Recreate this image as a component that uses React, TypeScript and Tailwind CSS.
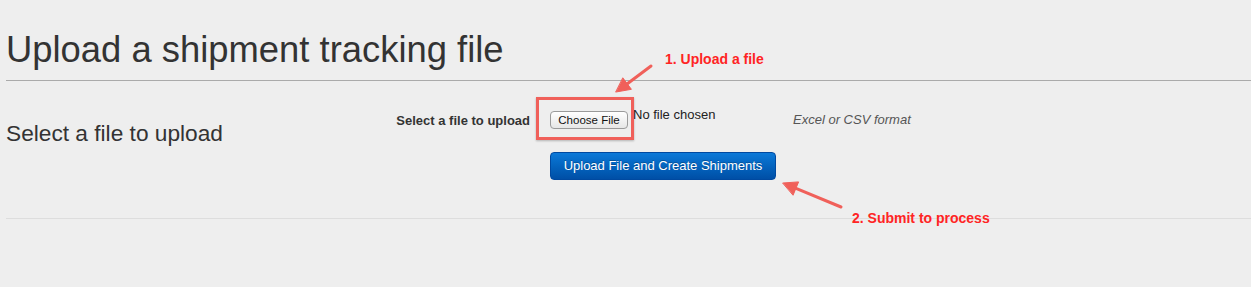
export default function App() {
  return (
    <div
      className="relative w-[1251px] h-[287px] overflow-hidden bg-[#eeeeee] text-[#333333]"
      style={{ fontFamily: '"Liberation Sans", Arial, sans-serif' }}
    >
      {/* Page header */}
      <div className="ml-[6px] pt-[30px] pb-[10px] border-b border-[#aaaaaa]">
        <h1 className="text-[36.4px] leading-[40px] font-normal">Upload a shipment tracking file</h1>
      </div>

      {/* Upload section */}
      <div className="ml-[6px] flex h-[138px] border-b border-[#dddddd]">
        <div className="w-[364px] pt-[37px]">
          <h3 className="text-[22.7px] leading-[30px] font-normal">Select a file to upload</h3>
        </div>

        <div className="flex flex-col pt-[24px]">
          <div className="flex items-start h-[26px]">
            <label className="w-[160px] mt-[6px] text-right text-[13px] leading-[20px] font-bold">
              Select a file to upload
            </label>
            <div className="ml-[20px] w-[238px] flex items-start">
              <button className="mt-[6px] h-[18px] w-[78px] rounded-[4px] border border-[#9a9a9a] bg-gradient-to-b from-white to-[#e6e6e6] text-[11.5px] leading-[16px] text-[#111111]">
                Choose File
              </button>
              <span className="ml-[5px] mt-[2.5px] text-[13px] leading-[14px] text-[#222222]">No file chosen</span>
            </div>
            <span className="ml-[5px] mt-[4.5px] text-[13px] leading-[20px] italic text-[#555555]">
              Excel or CSV format
            </span>
          </div>
          <div className="ml-[180px] mt-[21px]">
            <button className="h-[28px] w-[226px] rounded-[4px] border border-[#0049a0] bg-gradient-to-b from-[#0c79d8] to-[#004fa6] text-[13px] text-white [text-shadow:0_-1px_0_rgba(0,0,0,0.25)]">
              Upload File and Create Shipments
            </button>
          </div>
        </div>
      </div>

      {/* Annotations */}
      <div className="absolute left-[536px] top-[97px] w-[98px] h-[43px] border-[3px] border-[#f0605a] shadow-[0_1px_2px_rgba(0,0,0,0.25)]" />
      <svg className="absolute left-0 top-0 pointer-events-none" width="1251" height="287">
        <g fill="#f0605a" stroke="#f0605a" strokeLinecap="round" strokeLinejoin="round">
          <line x1="651" y1="66" x2="627" y2="84" strokeWidth="3" />
          <polygon points="616,92 631.4,89.3 623,78.1" strokeWidth="1" />
          <line x1="841" y1="207" x2="796" y2="188.4" strokeWidth="3" />
          <polygon points="783,183 798.6,181.9 793.2,194.9" strokeWidth="1" />
        </g>
      </svg>
      <div className="absolute left-[665px] top-[51px] text-[14px] leading-[16px] font-bold text-[#ff2424]">
        1. Upload a file
      </div>
      <div className="absolute left-[852px] top-[210px] text-[14px] leading-[16px] font-bold text-[#ff2424]">
        2. Submit to process
      </div>
    </div>
  );
}
